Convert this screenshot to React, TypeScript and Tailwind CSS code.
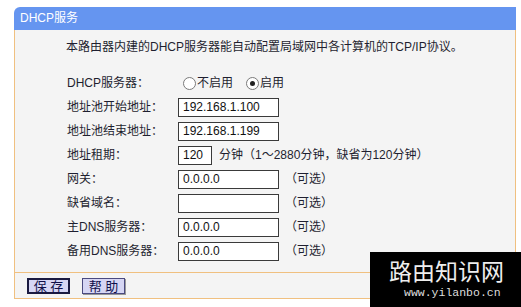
import React from 'react';

const rows: { label: string; value: string }[] = [
  { label: '地址池开始地址：', value: '192.168.1.100' },
  { label: '地址池结束地址：', value: '192.168.1.199' },
];

const optional = [
  { label: '网关：', value: '0.0.0.0' },
  { label: '缺省域名：', value: '' },
  { label: '主DNS服务器：', value: '0.0.0.0' },
  { label: '备用DNS服务器：', value: '0.0.0.0' },
];

const Radio: React.FC<{ checked?: boolean }> = ({ checked }) => (
  <span className="w-[13px] h-[13px] rounded-full border border-[#7a7a7a] bg-white flex items-center justify-center">
    {checked && <span className="w-[5px] h-[5px] rounded-full bg-[#222]" />}
  </span>
);

const Field: React.FC<{ value: string; className?: string }> = ({ value, className = 'w-[101px]' }) => (
  <div className={`h-[19px] border border-[#3a3a3a] bg-white pl-[4px] text-[12px] leading-[17px] text-[#111] ${className}`}>
    {value}
  </div>
);

export default function App() {
  return (
    <div className="relative w-[521px] h-[307px] bg-white overflow-hidden font-['Liberation_Sans','Noto_Sans_CJK_SC',sans-serif] text-[12px] text-[#1f1f30]">
      <div className="ml-[14px] pt-[7px] w-[502px]">
        {/* Header */}
        <div className="h-[23px] bg-[#6595f0] rounded-tl-[6px] pl-[6px] text-white leading-[23px]">
          DHCP服务
        </div>

        {/* Body */}
        <div className="border-x border-b border-[#f0c080] bg-[#f4f4f4]">
          <div className="h-[41px] pl-[51px] pt-[9px] leading-[16px]">
            本路由器内建的DHCP服务器能自动配置局域网中各计算机的TCP/IP协议。
          </div>

          <div className="pl-[52px] pb-[9px] border-b border-[#f0c080]">
            <div className="flex items-center h-[24px]">
              <span className="w-[111px]">DHCP服务器：</span>
              <div className="flex items-center ml-[5px]">
                <Radio />
                <span className="ml-[1px]">不启用</span>
                <span className="ml-[13px]"><Radio checked /></span>
                <span className="ml-[1px]">启用</span>
              </div>
            </div>

            {rows.map((r) => (
              <div key={r.label} className="flex items-center h-[24px]">
                <span className="w-[111px]">{r.label}</span>
                <Field value={r.value} />
              </div>
            ))}

            <div className="flex items-center h-[24px]">
              <span className="w-[111px]">地址租期：</span>
              <Field value="120" className="w-[34px]" />
              <span className="ml-[7px]">分钟</span>
              <span>（1～2880分钟，缺省为120分钟）</span>
            </div>

            {optional.map((r) => (
              <div key={r.label} className="flex items-center h-[24px]">
                <span className="w-[111px]">{r.label}</span>
                <Field value={r.value} />
                <span className="ml-[6px]">（可选）</span>
              </div>
            ))}
          </div>

          {/* Footer buttons */}
          <div className="h-[25px] pl-[12px] pt-[5px] flex gap-[12px]">
            <button className="w-[43px] h-[16px] bg-[#d6d6f4] border-2 border-[#1a1a40] flex items-center justify-center whitespace-pre text-[13px] leading-none text-[#10104a]">
              保 存
            </button>
            <button className="w-[43px] h-[16px] bg-[#d6d6f4] border border-[#4a4a80] shadow-[1px_1px_0_#999] flex items-center justify-center whitespace-pre text-[13px] leading-none text-[#10104a]">
              帮 助
            </button>
          </div>
        </div>
      </div>

      {/* Watermark overlay */}
      <div className="absolute left-[370px] top-[252px] w-[151px] h-[55px] bg-black flex flex-col items-start pt-[6px]">
        <span className="text-[23px] leading-[24px] text-[#eeeeee] font-['Noto_Sans_CJK_SC',sans-serif] ml-[19px]">路由知识网</span>
        <span className="mt-[5px] text-[11.5px] leading-[12px] text-[#dddddd] font-['Liberation_Mono',monospace] ml-[34px]">www.yilanbo.cn</span>
      </div>
    </div>
  );
}
